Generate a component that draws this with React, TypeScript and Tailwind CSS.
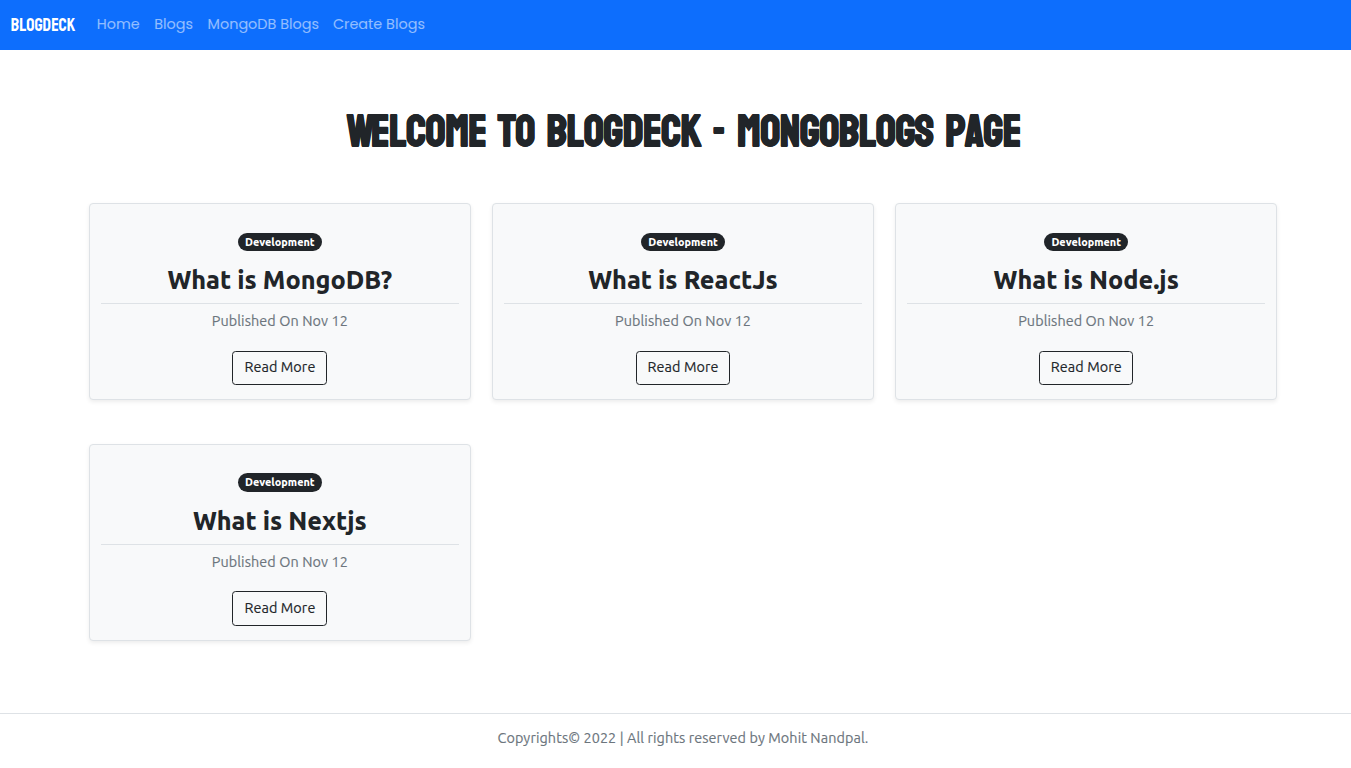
const links = [
  { label: 'Home', style: 'w-[43px] mr-[14.4px]' },
  { label: 'Blogs', style: 'w-[39px] mr-[14.4px]' },
  { label: 'MongoDB Blogs', style: 'w-[111px] mr-[14.4px]' },
  { label: 'Create Blogs', style: 'w-[93px]' },
];

const posts = [
  { title: 'What is MongoDB?', tag: 'Development', date: 'Nov 12' },
  { title: 'What is ReactJs', tag: 'Development', date: 'Nov 12' },
  { title: 'What is Node.js', tag: 'Development', date: 'Nov 12' },
  { title: 'What is Nextjs', tag: 'Development', date: 'Nov 12' },
];

function Navbar() {
  return (
    <nav className="flex h-[50px] items-center bg-[#0d6efd] pl-[10.8px]">
      <a className="mr-[21px] w-[65px] whitespace-nowrap font-['Staatliches','Bebas_Neue',sans-serif] text-[18px] tracking-[0.06px] text-white">
        BLOGDECK
      </a>
      {links.map((l) => (
        <a
          key={l.label}
          className={`whitespace-nowrap pb-px font-['Poppins','Inter',sans-serif] text-[14.4px] text-white/55 ${l.style}`}
        >
          {l.label}
        </a>
      ))}
    </nav>
  );
}

function Card({ title, tag, date }: { title: string; tag: string; date: string }) {
  return (
    <article className="flex h-[197px] w-[382px] flex-col items-center rounded-[4px] border border-[#dee2e6] bg-[#f8f9fa] px-[10.8px] pt-[28.6px] shadow-[0_2px_4px_rgba(0,0,0,0.075)]">
      <span className="flex h-[18.4px] w-[84px] shrink-0 items-center justify-center rounded-full bg-[#212529] text-[10.8px] font-extrabold text-white">
        {tag}
      </span>
      <h2 className="mt-[9.9px] flex h-[42px] w-full justify-center whitespace-nowrap text-[25.2px] leading-[38px] font-extrabold">
        {title}
      </h2>
      <div className="h-px w-full shrink-0 bg-[#dee2e6]" />
      <p className="mt-[6px] h-[22px] text-[14.4px] leading-[22px] tracking-[0.08px] whitespace-nowrap text-[#6c757d] [-webkit-text-stroke:0.15px]">
        Published On {date}
      </p>
      <button className="mt-[18.7px] mr-[0.4px] h-[34.4px] w-[94.6px] shrink-0 rounded-[3.6px] border border-[#212529] pl-[0.6px] text-[14.4px] leading-[31.6px] tracking-[0.08px] whitespace-nowrap [-webkit-text-stroke:0.15px]">
        <span className="block h-[31.8px]">Read More</span>
      </button>
    </article>
  );
}

export default function App() {
  return (
    <div className="h-[768px] w-[1351px] overflow-hidden bg-white font-['Ubuntu','Noto_Sans',sans-serif] text-[#212529]">
      <Navbar />
      <div className="flex h-[663px] w-[1366px] flex-col items-center">
        <h1 className="mt-[54px] h-[56px] whitespace-nowrap pl-[2px] font-['Staatliches','Bebas_Neue',sans-serif] text-[43.2px] leading-[56px] font-bold tracking-[-0.08px] [font-kerning:none] [word-spacing:5.4px] [-webkit-text-stroke:0.5px]">
          <span className="tracking-[-3px]">W</span>ELCOME TO BLOGDECK - MONGOBLOGS PAGE
        </h1>
        <main className="mt-[43.3px] grid grid-cols-[382px_382px_382px] gap-x-[21.2px] gap-y-[43.4px]">
          {posts.map((p) => (
            <Card key={p.title} {...p} />
          ))}
        </main>
      </div>
      <footer className="flex w-[1366px] justify-center border-t border-[#dee2e6] pt-[13px] text-[14.4px] leading-[22px] tracking-[0.08px] text-[#6c757d] [-webkit-text-stroke:0.15px]">
        Copyrights© 2022 | All rights reserved by Mohit Nandpal.
      </footer>
    </div>
  );
}
